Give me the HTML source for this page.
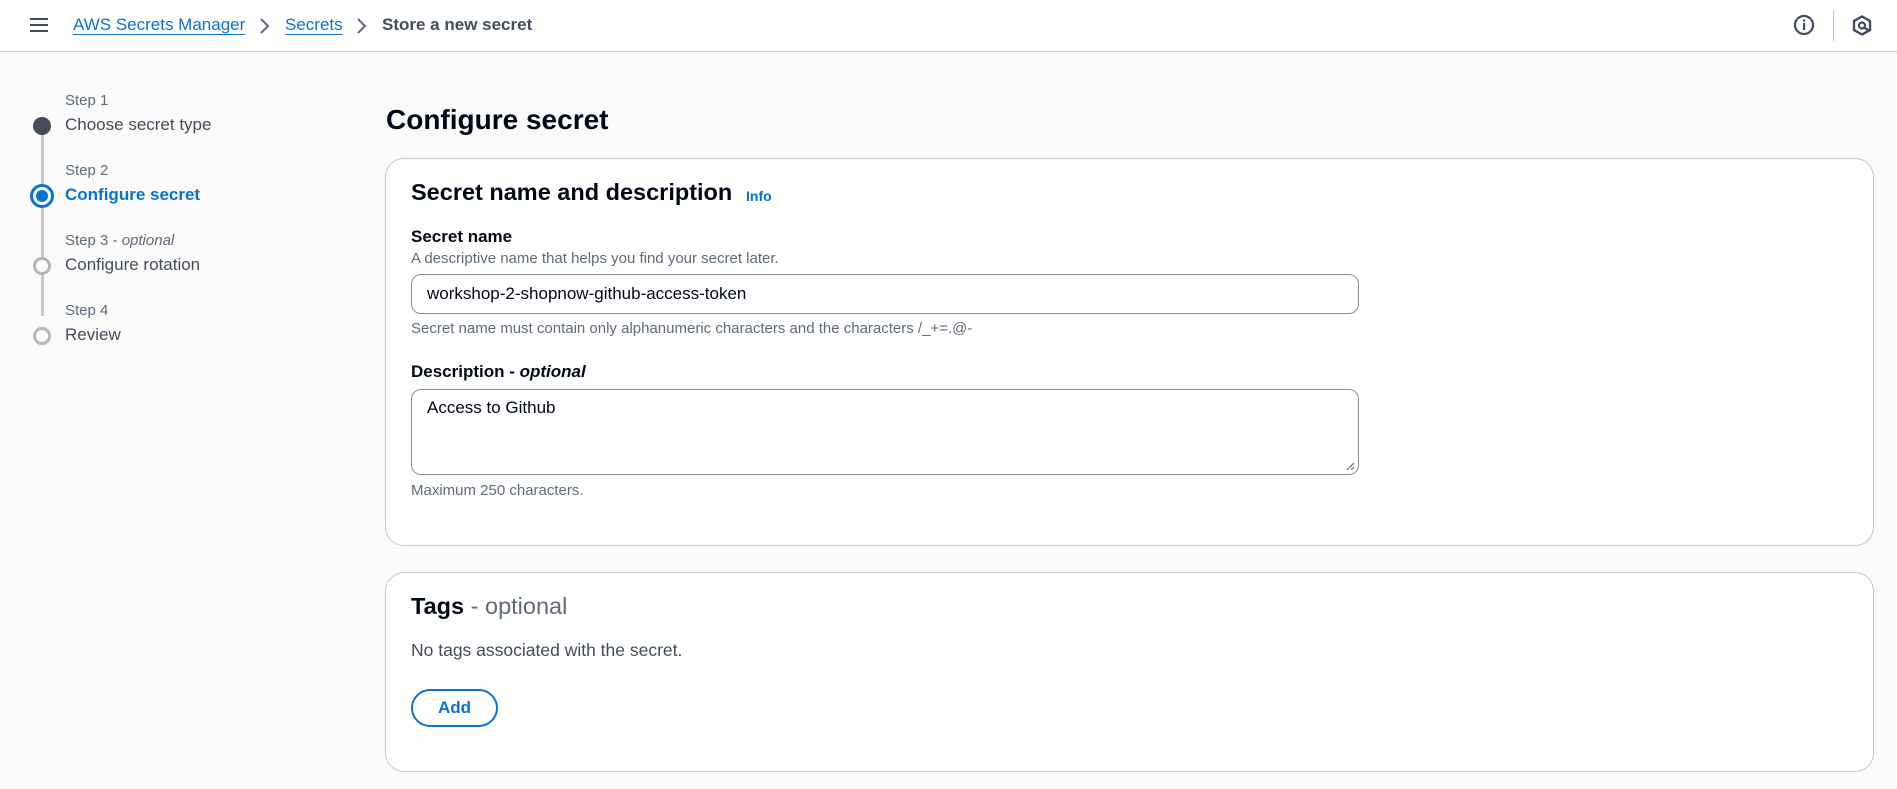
<!DOCTYPE html>
<html><head><meta charset="utf-8">
<style>
*{box-sizing:border-box;margin:0;padding:0}
body{width:1897px;height:789px;background:#fafafa;font-family:"Liberation Sans",sans-serif;position:relative;overflow:hidden;color:#000716}
.a{position:absolute;white-space:nowrap;line-height:1}
.hdr{position:absolute;left:0;top:0;width:1897px;height:52px;background:#fff;border-bottom:1px solid #c6c6cd}
.lnk{color:#0972d3;text-decoration:underline;text-underline-offset:4px}
.card{position:absolute;background:#fff;border:1px solid #c6c6cd;border-radius:19px}
.small{font-size:15px;color:#5f6b7a}
.lbl{font-size:17px;font-weight:bold}
.box{position:absolute;border:1px solid #8c8c94;border-radius:10px;background:#fff}
</style></head><body>
<div class="hdr"></div>
<div class="a" style="left:30px;top:18px;width:18px;height:14px">
 <div style="height:2px;background:#414d5c;margin-bottom:4px"></div>
 <div style="height:2px;background:#414d5c;margin-bottom:4px"></div>
 <div style="height:2px;background:#414d5c"></div>
</div>
<div class="a lnk" style="left:73px;top:16px;font-size:17px">AWS Secrets Manager</div>
<svg class="a" style="left:258px;top:17px" width="12" height="18"><path d="M3 2 L10 9 L3 16" stroke="#5f6b7a" stroke-width="2" fill="none"/></svg>
<div class="a lnk" style="left:285px;top:16px;font-size:17px">Secrets</div>
<svg class="a" style="left:355px;top:17px" width="12" height="18"><path d="M3 2 L10 9 L3 16" stroke="#5f6b7a" stroke-width="2" fill="none"/></svg>
<div class="a" style="left:382px;top:16px;font-size:17px;font-weight:bold;color:#414d5c">Store a new secret</div>
<svg class="a" style="left:1793px;top:14px" width="22" height="22"><circle cx="11" cy="11" r="9" stroke="#414d5c" stroke-width="2.2" fill="none"/><rect x="10" y="9" width="2.2" height="7" fill="#414d5c"/><rect x="10" y="5.5" width="2.2" height="2.2" fill="#414d5c"/></svg>
<div class="a" style="left:1833px;top:10px;width:1px;height:31px;background:#c6c6cd"></div>
<svg class="a" style="left:1852px;top:15px" width="20" height="21"><path d="M10 1.5 L18 6 L18 15 L10 19.5 L2 15 L2 6 Z" stroke="#414d5c" stroke-width="2.4" fill="none"/><circle cx="10" cy="10.5" r="3" stroke="#414d5c" stroke-width="2.2" fill="none"/><path d="M12 12.5 L16 15" stroke="#414d5c" stroke-width="2.4"/></svg>

<div class="a" style="left:40.5px;top:134px;width:3px;height:182px;background:#c6c6cd"></div>
<div class="a" style="left:33px;top:117px;width:18px;height:18px;border-radius:50%;background:#414d5c"></div>
<div class="a" style="left:30px;top:184px;width:24px;height:24px;border-radius:50%;border:3px solid #0972d3;background:#fafafa"></div>
<div class="a" style="left:36px;top:190px;width:12px;height:12px;border-radius:50%;background:#0972d3"></div>
<div class="a" style="left:33px;top:257px;width:18px;height:18px;border-radius:50%;border:3px solid #b4b4bb;background:#fafafa"></div>
<div class="a" style="left:33px;top:327px;width:18px;height:18px;border-radius:50%;border:3px solid #b4b4bb;background:#fafafa"></div>
<div class="a small" style="left:65px;top:93px">Step 1</div>
<div class="a" style="left:65px;top:116px;font-size:17px;color:#414d5c">Choose secret type</div>
<div class="a small" style="left:65px;top:163px">Step 2</div>
<div class="a" style="left:65px;top:186px;font-size:17px;color:#0972d3;font-weight:bold">Configure secret</div>
<div class="a small" style="left:65px;top:233px">Step 3 - <i>optional</i></div>
<div class="a" style="left:65px;top:256px;font-size:17px;color:#414d5c">Configure rotation</div>
<div class="a small" style="left:65px;top:303px">Step 4</div>
<div class="a" style="left:65px;top:326px;font-size:17px;color:#414d5c">Review</div>

<div class="a" style="left:386px;top:106px;font-size:28px;font-weight:bold">Configure secret</div>

<div class="card" style="left:385px;top:158px;width:1489px;height:388px"></div>
<div class="a" style="left:411px;top:181px;font-size:23.5px;font-weight:bold">Secret name and description</div>
<div class="a" style="left:746px;top:189px;font-size:14px;font-weight:bold;color:#0972d3">Info</div>
<div class="a lbl" style="left:411px;top:228px">Secret name</div>
<div class="a small" style="left:411px;top:251px">A descriptive name that helps you find your secret later.</div>
<div class="box" style="left:411px;top:274px;width:948px;height:40px"></div>
<div class="a" style="left:427px;top:285px;font-size:17px">workshop-2-shopnow-github-access-token</div>
<div class="a small" style="left:411px;top:321px">Secret name must contain only alphanumeric characters and the characters /_+=.@-</div>
<div class="a lbl" style="left:411px;top:363px">Description - <i>optional</i></div>
<div class="box" style="left:411px;top:389px;width:948px;height:86px"></div>
<svg class="a" style="left:1345px;top:461px" width="10" height="10"><path d="M9 2 L2 9 M9 6 L6 9" stroke="#5f6b7a" stroke-width="1.2"/></svg>
<div class="a" style="left:427px;top:399px;font-size:17px">Access to Github</div>
<div class="a small" style="left:411px;top:483px">Maximum 250 characters.</div>

<div class="card" style="left:385px;top:572px;width:1489px;height:200px"></div>
<div class="a" style="left:411px;top:595px;font-size:23.5px"><b>Tags</b> <span style="color:#5f6b7a">- optional</span></div>
<div class="a" style="left:411px;top:642px;font-size:17.5px;color:#414d5c">No tags associated with the secret.</div>
<div class="a" style="left:411px;top:689px;width:87px;height:38px;border:2px solid #0972d3;border-radius:20px;color:#0972d3;font-weight:bold;font-size:17px;text-align:center;line-height:34px">Add</div>
</body></html>
